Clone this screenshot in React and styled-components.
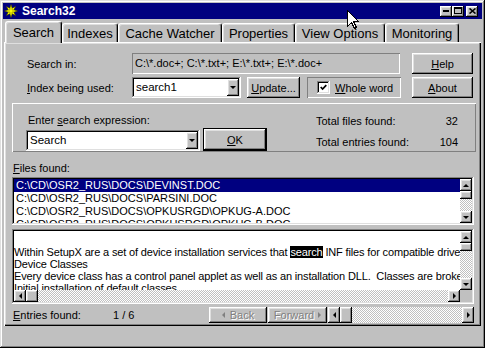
import styled, { createGlobalStyle, css } from "styled-components";

const GlobalStyle = createGlobalStyle`
  html, body { margin: 0; padding: 0; background: #c0c0c0; }
  body {
    font-family: "Liberation Sans", Arial, sans-serif;
    font-size: 11px;
    color: #000;
  }
  * { box-sizing: border-box; }
`;

const raised = css`
  box-shadow: inset -1px -1px #000, inset 1px 1px #fff, inset -2px -2px #808080,
    inset 2px 2px #dfdfdf;
`;

const sunken = css`
  box-shadow: inset -1px -1px #fff, inset 1px 1px #808080, inset -2px -2px #dfdfdf,
    inset 2px 2px #000;
`;

const checker = css`
  background: repeating-conic-gradient(#c0c0c0 0% 25%, #fff 0% 50%) 0 0 / 2px 2px;
`;

const tabs = [
  { label: "Search", w: 57, active: true },
  { label: "Indexes", w: 56 },
  { label: "Cache Watcher", w: 104 },
  { label: "Properties", w: 73 },
  { label: "View Options", w: 90 },
  { label: "Monitoring", w: 74 },
];

const files = [
  "C:\\CD\\OSR2_RUS\\DOCS\\DEVINST.DOC",
  "C:\\CD\\OSR2_RUS\\DOCS\\PARSINI.DOC",
  "C:\\CD\\OSR2_RUS\\DOCS\\OPKUSRGD\\OPKUG-A.DOC",
  "C:\\CD\\OSR2_RUS\\DOCS\\OPKUSRGD\\OPKUG-B.DOC",
];

const AppIcon = () => (
  <svg width="14" height="14" viewBox="0 0 14 14">
    <polygon
      points="13.5,7 9.8,8.2 11.6,11.6 8.2,9.8 7,13.5 5.8,9.8 2.4,11.6 4.2,8.2 0.5,7 4.2,5.8 2.4,2.4 5.8,4.2 7,0.5 8.2,4.2 11.6,2.4 9.8,5.8"
      fill="#ffff00"
      stroke="#404000"
      strokeWidth="0.6"
    />
    <circle cx="7" cy="7" r="2.2" fill="#ffff00" stroke="#808000" strokeWidth="0.6" />
  </svg>
);

const Cursor = () => (
  <CursorWrap width="12" height="20" viewBox="0 0 12 20">
    <path
      d="M0.5 0.5 L0.5 16.5 L4.5 12.5 L7.5 18.5 L9.5 17.5 L6.5 11.5 L11.5 11.5 Z"
      fill="#fff"
      stroke="#000"
      strokeWidth="1"
      shapeRendering="crispEdges"
    />
  </CursorWrap>
);

const VBar = () => (
  <VScroll>
    <SBtn>
      <Arrow $dir="up" />
    </SBtn>
    <Thumb $h={8} />
    <Track />
    <SBtn>
      <Arrow $dir="down" />
    </SBtn>
  </VScroll>
);

const App = () => {
  return (
    <>
      <GlobalStyle />
      <Window>
        <TitleBar>
          <AppIcon />
          <Title>Search32</Title>
          <CapButton>
            <svg width="6" height="2" viewBox="0 0 6 2">
              <rect x="0" y="0" width="6" height="2" fill="#000" />
            </svg>
          </CapButton>
          <CapButton>
            <svg width="8" height="7" viewBox="0 0 8 7" shapeRendering="crispEdges">
              <rect x="0.5" y="0.5" width="7" height="6" fill="none" stroke="#000" />
              <rect x="0" y="0" width="8" height="2" fill="#000" />
            </svg>
          </CapButton>
          <CapButton $gap>
            <svg width="7" height="6" viewBox="0 0 7 6">
              <path d="M0.5 0.5 L6.5 5.5 M6.5 0.5 L0.5 5.5" stroke="#000" strokeWidth="1.6" />
            </svg>
          </CapButton>
        </TitleBar>

        <Client>
          <TabStrip>
            {tabs.map((t) => (
              <Tab key={t.label} $w={t.w} $active={t.active}>
                {t.label}
              </Tab>
            ))}
          </TabStrip>

          <Panel>
            <Row>
              <FieldLabel>Search in:</FieldLabel>
              <StaticField>C:\*.doc+; C:\*.txt+; E:\*.txt+; E:\*.doc+</StaticField>
              <Button $w={61} $ml={12}>
                <span>
                  <U>H</U>elp
                </span>
              </Button>
            </Row>
            <Row $mt={3}>
              <FieldLabel>
                <U>I</U>ndex being used:
              </FieldLabel>
              <Combo $w={109}>
                <ComboText>search1</ComboText>
                <DropBtn>
                  <Arrow $dir="down" />
                </DropBtn>
              </Combo>
              <Button $w={53} $ml={6}>
                <span>
                  <U>U</U>pdate...
                </span>
              </Button>
              <CheckFrame>
                <CheckBox>
                  <svg width="7" height="7" viewBox="0 0 7 7">
                    <polyline
                      points="0.7,3 2.6,5 6.3,1.2"
                      fill="none"
                      stroke="#000"
                      strokeWidth="1.7"
                    />
                  </svg>
                </CheckBox>
                <span>
                  <U>W</U>hole word
                </span>
              </CheckFrame>
              <Button $w={61} $ml={11}>
                <span>
                  <U>A</U>bout
                </span>
              </Button>
            </Row>

            <Group>
              <ExprCol>
                <ExprLabel>
                  Enter <U>s</U>earch expression:
                </ExprLabel>
                <ExprRow>
                  <Combo $w={174}>
                    <ComboText>Search</ComboText>
                    <DropBtn>
                      <Arrow $dir="down" />
                    </DropBtn>
                  </Combo>
                  <Button $w={64} $h={23} $ml={3} $default>
                    <span>
                      <U>O</U>K
                    </span>
                  </Button>
                </ExprRow>
              </ExprCol>
              <StatsCol>
                <StatRow>
                  <span>Total files found:</span>
                  <span>32</span>
                </StatRow>
                <StatRow>
                  <span>Total entries found:</span>
                  <span>104</span>
                </StatRow>
              </StatsCol>
            </Group>

            <SectionLabel>
              <U>F</U>iles found:
            </SectionLabel>
            <ListBox>
              <ListRows>
                {files.map((f, i) => (
                  <ListRow key={f} $selected={i === 0}>
                    {f}
                  </ListRow>
                ))}
              </ListRows>
              <VBar />
            </ListBox>

            <TextBox>
              <TextContent>
                <div>
                  Within SetupX are a set of device installation services that <Mark>search</Mark>{" "}
                  INF files for compatible drivers. SetupX also
                </div>
                <div>Device Classes</div>
                <div>
                  Every device class has a control panel applet as well as an installation DLL.
                  {"  "}Classes are broken down
                </div>
                <div>Initial installation of default classes</div>
              </TextContent>
              <VBar />
              <HScroll>
                <SBtn>
                  <Arrow $dir="left" />
                </SBtn>
                <Thumb $w={12} />
                <Track />
                <SBtn>
                  <Arrow $dir="right" />
                </SBtn>
              </HScroll>
              <Corner />
            </TextBox>

            <BottomRow>
              <EntriesLabel>
                <U>E</U>ntries found:
              </EntriesLabel>
              <EntriesValue>1 / 6</EntriesValue>
              <Button $w={58} $h={16} $disabled>
                <Arrow $dir="left" $disabled />
                <NavText $ml={5}>Back</NavText>
              </Button>
              <Button $w={59} $h={16} $ml={1} $disabled>
                <NavText $mr={4}>Forward</NavText>
                <Arrow $dir="right" $disabled />
              </Button>
              <HScroll $w={146} $h={16} $ml={1}>
                <SBtn $h={16}>
                  <Arrow $dir="left" />
                </SBtn>
                <Thumb $w={12} />
                <Track />
                <SBtn $h={16}>
                  <Arrow $dir="right" />
                </SBtn>
              </HScroll>
            </BottomRow>
          </Panel>
        </Client>
        <Cursor />
      </Window>
    </>
  );
};

export default App;

const Window = styled.div`
  position: relative;
  width: 485px;
  height: 348px;
  padding: 3px;
  background: #c0c0c0;
  display: flex;
  flex-direction: column;
  box-shadow: inset -1px -1px #000, inset 1px 1px #dfdfdf, inset -2px -2px #808080,
    inset 2px 2px #fff;
  overflow: hidden;
`;

const TitleBar = styled.div`
  height: 16px;
  flex-shrink: 0;
  background: #000080;
  display: flex;
  align-items: center;
  padding: 0 4px 0 1px;
`;

const Title = styled.span`
  flex: 1;
  margin-left: 4px;
  color: #fff;
  font-weight: bold;
  font-size: 12px;
  line-height: 16px;
`;

const CapButton = styled.div`
  width: 12px;
  height: 11px;
  margin-left: ${({ $gap }) => ($gap ? 2 : 0)}px;
  background: #c0c0c0;
  ${raised};
  display: flex;
  align-items: center;
  justify-content: center;
  padding-bottom: 1px;
`;

const CursorWrap = styled.svg`
  position: absolute;
  left: 347px;
  top: 10px;
`;

const Client = styled.div`
  flex: 1;
  display: flex;
  flex-direction: column;
  padding: 2px 1px 0 1px;
`;

const TabStrip = styled.div`
  height: 21px;
  display: flex;
  align-items: flex-end;
  padding-left: 1px;
`;

const Tab = styled.div`
  position: relative;
  z-index: ${({ $active }) => ($active ? 1 : 0)};
  width: ${({ $w }) => $w}px;
  height: ${({ $active }) => ($active ? 22 : 19)}px;
  margin-bottom: ${({ $active }) => ($active ? -1 : 0)}px;
  background: #c0c0c0;
  border-left: 1px solid #fff;
  border-top: 1px solid #fff;
  border-right: 1px solid #000;
  border-radius: 3px 3px 0 0;
  box-shadow: inset -1px 0 #808080, inset 1px 1px #dfdfdf;
  display: flex;
  align-items: center;
  justify-content: center;
  font-size: 13px;
  white-space: nowrap;
`;

const Panel = styled.div`
  height: 284px;
  flex-shrink: 0;
  padding: 11px 7px 0 8px;
  display: flex;
  flex-direction: column;
  box-shadow: inset 1px 1px #fff, inset -1px -1px #000, inset -2px -2px #808080,
    inset 2px 2px #dfdfdf;
`;

const Row = styled.div`
  display: flex;
  align-items: center;
  height: 21px;
  margin-top: ${({ $mt }) => $mt || 0}px;
`;

const FieldLabel = styled.div`
  width: 105px;
  margin-left: 15px;
  flex-shrink: 0;
`;

const U = styled.span`
  text-decoration: underline;
`;

const StaticField = styled.div`
  width: 268px;
  height: 21px;
  padding-left: 3px;
  line-height: 21px;
  box-shadow: inset 1px 1px #808080, inset -1px -1px #fff;
  white-space: nowrap;
  overflow: hidden;
`;

const Button = styled.div`
  width: ${({ $w }) => $w}px;
  height: ${({ $h }) => $h || 21}px;
  margin-left: ${({ $ml }) => $ml || 0}px;
  flex-shrink: 0;
  display: flex;
  align-items: center;
  justify-content: center;
  white-space: nowrap;
  color: ${({ $disabled }) => ($disabled ? "#808080" : "#000")};
  text-shadow: ${({ $disabled }) => ($disabled ? "1px 1px 0 #fff" : "none")};
  ${({ $default }) =>
    $default
      ? css`
          box-shadow: inset 0 0 0 1px #000, inset -2px -2px #000, inset 2px 2px #fff,
            inset -3px -3px #808080, inset 3px 3px #dfdfdf;
        `
      : raised};
`;

const NavText = styled.span`
  margin-left: ${({ $ml }) => $ml || 0}px;
  margin-right: ${({ $mr }) => $mr || 0}px;
`;

const Combo = styled.div`
  width: ${({ $w }) => $w}px;
  height: 21px;
  flex-shrink: 0;
  background: #fff;
  ${sunken};
  padding: 2px;
  display: flex;
`;

const ComboText = styled.div`
  flex: 1;
  padding-left: 2px;
  line-height: 17px;
  font-size: 11.5px;
`;

const DropBtn = styled.div`
  width: 12px;
  background: #c0c0c0;
  ${raised};
  display: flex;
  align-items: center;
  justify-content: center;
`;

const Arrow = styled.span`
  width: 0;
  height: 0;
  border-style: solid;
  ${({ $dir, $disabled }) => {
    const c = $disabled ? "#808080" : "#000";
    if ($dir === "up") return `border-width: 0 3px 3px 3px; border-color: transparent transparent ${c} transparent;`;
    if ($dir === "down") return `border-width: 3px 3px 0 3px; border-color: ${c} transparent transparent transparent;`;
    if ($dir === "left") return `border-width: 3px 3px 3px 0; border-color: transparent ${c} transparent transparent;`;
    return `border-width: 3px 0 3px 3px; border-color: transparent transparent transparent ${c};`;
  }}
`;

const CheckFrame = styled.div`
  width: 94px;
  height: 21px;
  margin-left: 7px;
  flex-shrink: 0;
  display: flex;
  align-items: center;
  gap: 5px;
  padding-left: 10px;
  box-shadow: inset 1px 1px #808080, inset -1px -1px #fff;
  white-space: nowrap;
`;

const CheckBox = styled.div`
  width: 13px;
  height: 13px;
  flex-shrink: 0;
  background: #fff;
  ${sunken};
  display: flex;
  align-items: center;
  justify-content: center;
`;

const Group = styled.div`
  margin-top: 5px;
  margin-right: -2px;
  height: 49px;
  flex-shrink: 0;
  display: flex;
  padding-left: 14px;
  box-shadow: inset 1px 1px #fff, inset -1px -1px #808080;
`;

const ExprCol = styled.div`
  display: flex;
  flex-direction: column;
  padding-top: 11px;
`;

const ExprLabel = styled.div`
  margin-left: 2px;
  line-height: 13px;
`;

const ExprRow = styled.div`
  margin-top: 1px;
  display: flex;
  align-items: flex-end;
`;

const StatsCol = styled.div`
  width: 142px;
  margin-left: auto;
  margin-right: 18px;
  padding-top: 12px;
  display: flex;
  flex-direction: column;
  gap: 8px;
`;

const StatRow = styled.div`
  display: flex;
  justify-content: space-between;
  line-height: 13px;
`;

const SectionLabel = styled.div`
  margin-top: 10px;
  margin-left: 1px;
  line-height: 13px;
`;

const ListBox = styled.div`
  margin-top: 2px;
  height: 48px;
  flex-shrink: 0;
  background: #fff;
  ${sunken};
  padding: 2px;
  display: flex;
`;

const ListRows = styled.div`
  flex: 1;
  overflow: hidden;
`;

const ListRow = styled.div`
  height: 13px;
  line-height: 13px;
  padding-left: 2px;
  white-space: nowrap;
  background: ${({ $selected }) => ($selected ? "#000080" : "transparent")};
  color: ${({ $selected }) => ($selected ? "#fff" : "#000")};
`;

const VScroll = styled.div`
  width: 12px;
  display: flex;
  flex-direction: column;
`;

const HScroll = styled.div`
  display: flex;
  height: ${({ $h }) => $h || 12}px;
  width: ${({ $w }) => ($w ? `${$w}px` : "auto")};
  margin-left: ${({ $ml }) => $ml || 0}px;
  flex-shrink: 0;
`;

const SBtn = styled.div`
  width: 12px;
  height: ${({ $h }) => $h || 12}px;
  flex-shrink: 0;
  background: #c0c0c0;
  ${raised};
  display: flex;
  align-items: center;
  justify-content: center;
`;

const Thumb = styled.div`
  width: ${({ $w }) => ($w ? `${$w}px` : "auto")};
  height: ${({ $h }) => ($h ? `${$h}px` : "auto")};
  flex-shrink: 0;
  background: #c0c0c0;
  ${raised};
`;

const Track = styled.div`
  flex: 1;
  ${checker};
`;

const TextBox = styled.div`
  margin-top: 4px;
  height: 75px;
  flex-shrink: 0;
  background: #fff;
  ${sunken};
  padding: 2px;
  display: grid;
  grid-template-columns: 1fr 12px;
  grid-template-rows: 1fr 12px;
  overflow: hidden;
`;

const TextContent = styled.div`
  overflow: hidden;
  white-space: pre;
  padding-top: 15px;
  line-height: 12px;
  letter-spacing: -0.15px;
`;

const Mark = styled.span`
  background: #000;
  color: #fff;
`;

const Corner = styled.div`
  background: #c0c0c0;
`;

const BottomRow = styled.div`
  margin-top: 3px;
  height: 16px;
  display: flex;
  align-items: center;
`;

const EntriesLabel = styled.div`
  width: 100px;
  margin-left: 1px;
`;

const EntriesValue = styled.div`
  width: 96px;
`;
